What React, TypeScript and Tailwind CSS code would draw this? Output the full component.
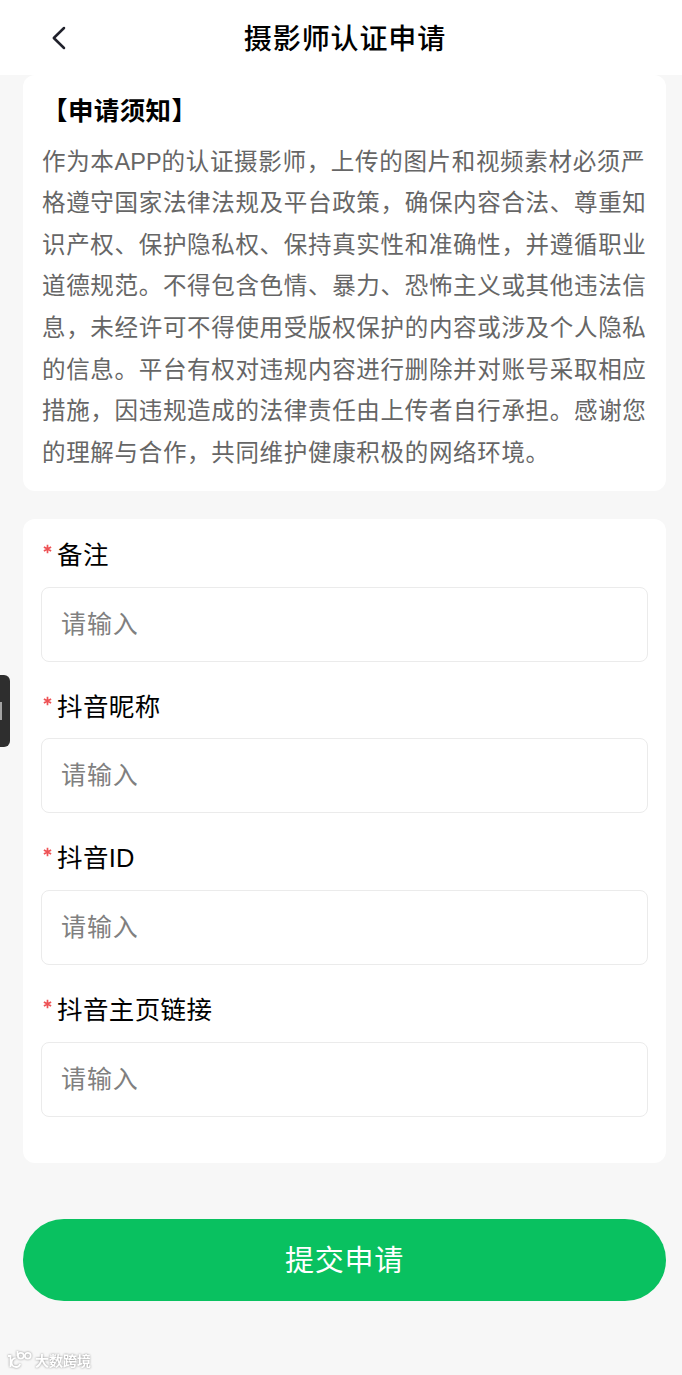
const noticeLines = [
  "作为本APP的认证摄影师，上传的图片和视频素材必须严",
  "格遵守国家法律法规及平台政策，确保内容合法、尊重知",
  "识产权、保护隐私权、保持真实性和准确性，并遵循职业",
  "道德规范。不得包含色情、暴力、恐怖主义或其他违法信",
  "息，未经许可不得使用受版权保护的内容或涉及个人隐私",
  "的信息。平台有权对违规内容进行删除并对账号采取相应",
  "措施，因违规造成的法律责任由上传者自行承担。感谢您",
  "的理解与合作，共同维护健康积极的网络环境。",
];

const fields = ["备注", "抖音昵称", "抖音ID", "抖音主页链接"];

// Latin runs sit tighter than the Chinese text around them
function Mixed({ text }: { text: string }) {
  return (
    <>
      {text.split(/([A-Z]+)/).map((part, i) =>
        /[A-Z]/.test(part) ? (
          <span key={i} className="font-['Liberation_Sans',sans-serif] leading-none tracking-normal">{part}</span>
        ) : (
          part
        )
      )}
    </>
  );
}

function Field({ label }: { label: string }) {
  return (
    <label className="block h-[151.8px]">
      <span className="flex h-[67.6px] items-center pl-0.5">
        <svg width="9" height="10" viewBox="0 0 9 10" className="mb-2 mr-[5px] shrink-0" fill="none" stroke="#ee5356" strokeWidth="1.7">
          <path d="M4.5.8v8.4M.9 2.9l7.2 4.2M.9 7.1l7.2-4.2" />
        </svg>
        <span className="whitespace-nowrap text-[25.5px] leading-[36px] tracking-[0.4px] text-black">
          <Mixed text={label} />
        </span>
      </span>
      <input
        type="text"
        placeholder="请输入"
        className="block h-[75px] w-full rounded-lg border border-[#ebebeb] bg-white px-[19px] pb-[5px] text-[25px] tracking-[0.9px] outline-none placeholder:text-[#808080]"
      />
    </label>
  );
}

export default function App() {
  return (
    <div className="relative min-h-[1375px] w-[682px] overflow-hidden bg-[#f7f7f7] font-['Noto_Sans_CJK_SC',sans-serif]">
      <header className="grid h-[75px] grid-cols-[95px_1fr_87px] items-center bg-white">
        <button className="ml-[51px] w-4" aria-label="返回">
          <svg width="16" height="24" viewBox="0 0 16 24" fill="none" stroke="#20212b" strokeWidth="2.5" strokeLinecap="round" strokeLinejoin="round">
            <path d="M13 2 2.8 12 13 22" />
          </svg>
        </button>
        <h1 className="pb-0.5 text-center text-[28px] font-medium leading-none tracking-[0.9px] text-black">摄影师认证申请</h1>
      </header>

      <main className="pl-[23px] pr-4">
        <section className="h-[416px] rounded-xl bg-white px-[19px] pt-3.5">
          <h2 className="h-[50.6px] text-[25.5px] font-bold leading-[40px] tracking-[0.4px] text-black">【申请须知】</h2>
          <div className="text-[23.5px] leading-[41.6px] tracking-[0.68px] text-[#666]">
            {noticeLines.map((line) => (
              <p key={line} className="h-[41.6px] whitespace-nowrap">
                <Mixed text={line} />
              </p>
            ))}
          </div>
        </section>

        <section className="mt-7 h-[644px] rounded-xl bg-white px-[18px]">
          {fields.map((label) => (
            <Field key={label} label={label} />
          ))}
        </section>

        <button className="mt-14 block h-[82px] w-full rounded-full bg-[#09c160] pb-[3px] text-[29px] leading-none tracking-[0.7px] text-white">
          提交申请
        </button>
      </main>

      {/* 侧边悬浮把手 */}
      <div className="absolute left-0 top-[675px] flex h-[72px] w-2.5 items-center rounded-r-md bg-[#2e2e2e]">
        <div className="h-[18px] w-0.5 bg-[#a3a3a3]" />
      </div>

      {/* 水印 */}
      <div className="absolute left-[7px] top-[1350px] flex items-center gap-0.5 drop-shadow-[0_0_1px_#8c8c8c]">
        <svg width="26" height="20" viewBox="0 0 26 20" fill="none" stroke="#fff" strokeWidth="1.8">
          <path d="M1 6h2.5v11M8.6 8.2a4.4 4.4 0 1 0 4.6 5.8" />
          <path d="M10.5 1v5" />
          <circle cx="13.8" cy="5.8" r="2.9" />
          <circle cx="20.8" cy="5.8" r="2.9" />
        </svg>
        <span className="whitespace-nowrap text-[14px] font-bold leading-5 text-white">大数跨境</span>
      </div>
    </div>
  );
}
